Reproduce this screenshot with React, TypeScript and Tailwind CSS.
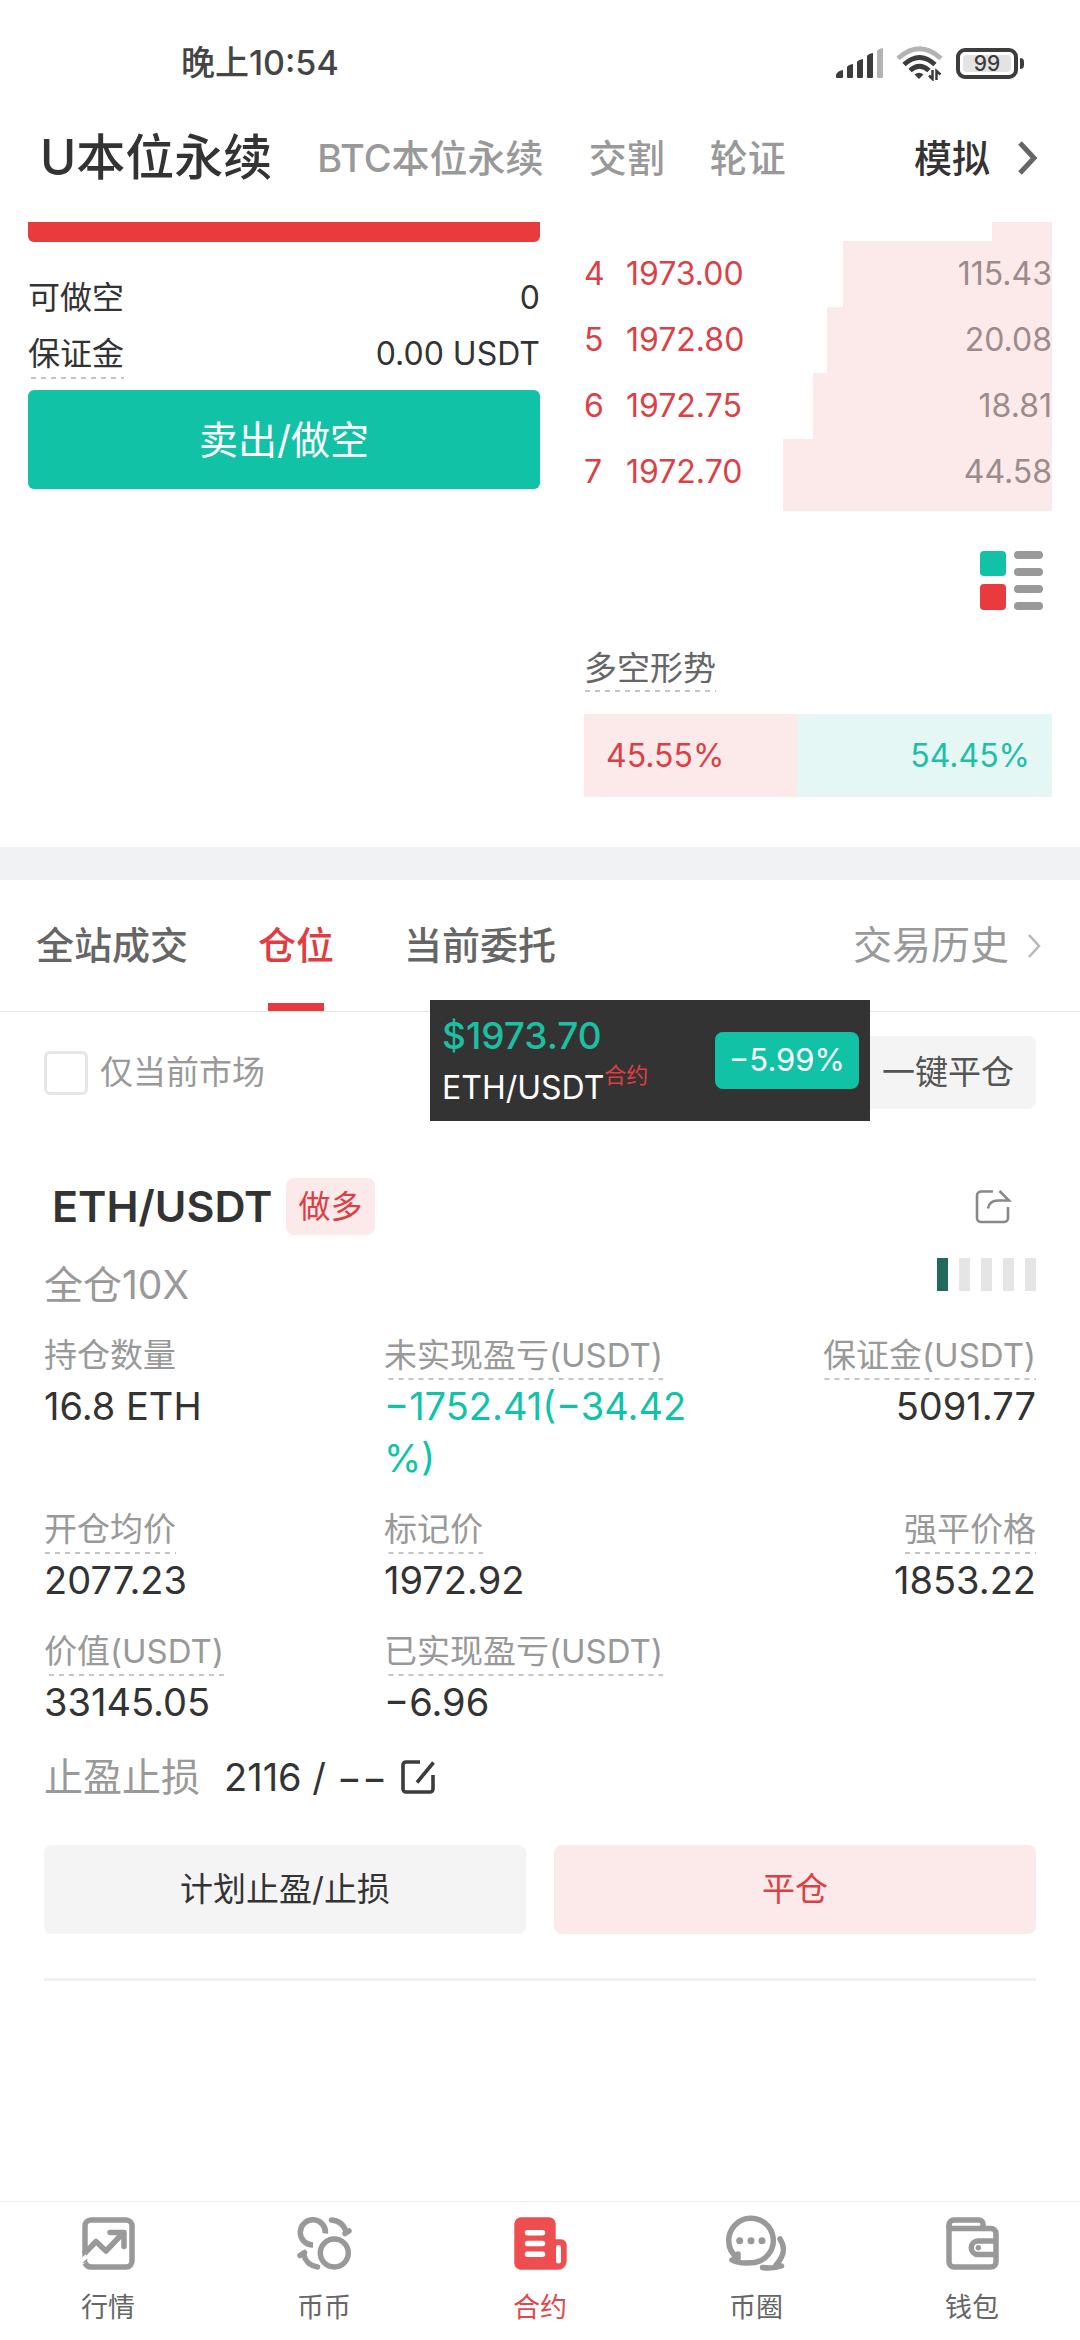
import { useState } from "react";
import type { ReactNode } from "react";

interface OrderRow {
  level: string;
  price: string;
  amount: string;
  depth: number;
}

interface Metric {
  label: string;
  value: ReactNode;
  underline: boolean;
}

const asks: OrderRow[] = [
  { level: "4", price: "1973.00", amount: "115.43", depth: 76 },
  { level: "5", price: "1972.80", amount: "20.08", depth: 82 },
  { level: "6", price: "1972.75", amount: "18.81", depth: 87 },
  { level: "7", price: "1972.70", amount: "44.58", depth: 98 },
];

const metrics: Metric[] = [
  { label: "持仓数量", value: "16.8 ETH", underline: false },
  {
    label: "未实现盈亏(USDT)",
    value: (
      <span className="text-[#0fc3a7]">
        −1752.41(−34.42
        <br />
        %)
      </span>
    ),
    underline: true,
  },
  { label: "保证金(USDT)", value: "5091.77", underline: true },
  { label: "开仓均价", value: "2077.23", underline: true },
  { label: "标记价", value: "1972.92", underline: true },
  { label: "强平价格", value: "1853.22", underline: true },
  { label: "价值(USDT)", value: "33145.05", underline: true },
  { label: "已实现盈亏(USDT)", value: "−6.96", underline: true },
];

const dashed =
  "bg-[linear-gradient(90deg,#c4c4c4_50%,transparent_50%)] bg-[length:10px_2px] bg-bottom bg-repeat-x";

// bar that grows from the right edge of its cell
const depthStyle = (depth: number) => ({
  background: `linear-gradient(#fceaea, #fceaea) right / ${depth}% 100% no-repeat`,
});

function StatusBar() {
  return (
    <div className="flex h-[94px] items-center justify-between pt-8 pr-14 pl-[181px] text-[#444444]">
      <span className="text-[34px] leading-[48px] font-medium">晚上10:54</span>
      <div className="flex items-center">
        <svg width="48" height="32" viewBox="0 0 48 32" fill="#3c3c3c">
          <path d="M0 28q1-4 7-5v7q0 1-1 1H1q-1 0-1-1z" />
          <path d="M11 20q1-2 6-3v13q0 1-1 1h-4q-1 0-1-1z" />
          <path d="M21 15q1-2 6-3v18q0 1-1 1h-4q-1 0-1-1z" />
          <path d="M31 9q1-2 6-3v24q0 1-1 1h-4q-1 0-1-1z" />
          <path d="M41 4q1-2 6-3v29q0 1-1 1h-4q-1 0-1-1z" fill="#b3b3b3" />
        </svg>
        <svg className="ml-3" width="48" height="36" viewBox="0 0 48 36" fill="none" strokeWidth="4.800" strokeLinecap="butt">
          <path d="M2 13.500Q23.500-6 45 13.500" stroke="#b3b3b3" />
          <path d="M8 19.500Q23.500 5.500 39 19.500" stroke="#3c3c3c" />
          <path d="M14 25.500Q23.500 17 33 25.500" stroke="#3c3c3c" />
          <path d="M18.500 29.500q4.500-3.500 9 0l-4.500 4.500z" fill="#3c3c3c" />
          <path d="M36.500 25v9l-3.500-3.500M40.500 35v-9l4 3.500" stroke="#3c3c3c" strokeWidth="2.500" />
        </svg>
        <div className="ml-3 flex h-[31px] w-[62px] items-center justify-center rounded-[9px] border-4 border-[#3c3c3c] p-[3px]">
          <span className="flex h-full w-full items-center justify-center rounded-sm bg-[#e3e3e3] text-[21px] leading-none font-medium text-[#3c3c3c]">
            99
          </span>
        </div>
        <span className="ml-[2px] h-[11px] w-1 rounded-r-sm bg-[#3c3c3c]" />
      </div>
    </div>
  );
}

function TopNav() {
  return (
    <nav className="flex h-32 items-center justify-between pr-[42px] pl-10 text-[38px] leading-[56px] font-medium text-[#999999]">
      <div className="flex items-center gap-[45px]">
        <a href="#usdt" className="text-[49px] text-[#333333]">U本位永续</a>
        <a href="#coin">BTC本位永续</a>
        <a href="#delivery">交割</a>
        <a href="#warrant">轮证</a>
      </div>
      <a href="#demo" className="flex items-center gap-7 text-[#333333]">
        模拟
        <svg width="20" height="34" viewBox="0 0 20 34" fill="none" stroke="#666666" strokeWidth="5">
          <path d="M2 2l14 15L2 32" />
        </svg>
      </a>
    </nav>
  );
}

function TradePanel() {
  return (
    <div className="text-[32px] leading-10 text-[#333333]">
      <div className="h-5 rounded-b-md bg-[#e93a3d]" />
      <div className="mt-9 flex justify-between">
        <span>可做空</span>
        <span>0</span>
      </div>
      <div className="mt-4 flex items-start justify-between">
        <span className={`pb-[5px] ${dashed}`}>保证金</span>
        <span>0.00 USDT</span>
      </div>
      <button className="mt-[11px] h-[99px] w-full rounded-md bg-[#11c2a7] text-[39px] text-white">
        卖出/做空
      </button>
    </div>
  );
}

function OrderBook() {
  return (
    <div className="flex flex-col text-[32px] leading-10">
      <table className="w-full table-fixed leading-[66px]">
        <colgroup>
          <col className="w-[42px]" />
          <col className="w-[151px]" />
          <col />
        </colgroup>
        <tbody>
          <tr className="h-[19px]">
            <td colSpan={2} className="p-0" />
            <td className="p-0" style={depthStyle(22)} />
          </tr>
          {asks.map((row) => (
            <tr key={row.level} className="h-[66px] align-top last:h-[72px]">
              <td className="p-0 text-[#dc3f45]">{row.level}</td>
              <td className="p-0 text-[#dc3f45]">{row.price}</td>
              <td className="p-0 text-right text-[#9b8b8b]" style={depthStyle(row.depth)}>
                {row.amount}
              </td>
            </tr>
          ))}
        </tbody>
      </table>
      <button className="mt-10 mr-2 self-end">
        <svg width="64" height="60" viewBox="0 0 64 60">
          <rect x="0" y="0" width="26" height="25" rx="4" fill="#11c2a7" />
          <rect x="0" y="33" width="26" height="26" rx="4" fill="#e93a3d" />
          <g fill="#999999">
            <rect x="34" y="0" width="29" height="8" rx="4" />
            <rect x="34" y="17" width="29" height="8" rx="4" />
            <rect x="34" y="34" width="29" height="8" rx="4" />
            <rect x="34" y="51" width="29" height="8" rx="4" />
          </g>
        </svg>
      </button>
      <span className={`mt-[37px] self-start pb-1 text-[33px] text-[#666666] ${dashed}`}>多空形势</span>
      <div className="mt-[22px] flex h-[83px] items-center">
        <span className="flex h-full items-center bg-[#fceaea] pl-[22px] text-[#dc3f45]" style={{ width: "45.55%" }}>
          45.55%
        </span>
        <span className="flex h-full flex-1 items-center justify-end bg-[#e5f7f5] pr-[22px] text-[#1fbfa5]">
          54.45%
        </span>
      </div>
    </div>
  );
}

function FloatingTicker() {
  return (
    <div className="absolute -top-3 right-[210px] flex h-[121px] w-[440px] items-center justify-between bg-[#333333] pr-[11px] pl-3">
      <div className="flex flex-col">
        <span className="text-[37px] leading-[54px] font-medium text-[#1dbfa3]">$1973.70</span>
        <span className="flex items-start text-[32px] leading-[50px] text-white">
          ETH/USDT
          <span className="text-[22px] leading-6 text-[#e03d42]">合约</span>
        </span>
      </div>
      <span className="flex h-[57px] items-center rounded-lg bg-[#11c2a7] px-[14px] text-[31px] text-white">
        −5.99%
      </span>
    </div>
  );
}

function PositionCard() {
  return (
    <article className="mx-11 mt-[69px] text-[#333333]">
      <header className="flex h-[57px] items-center pr-6 pl-2">
        <h2 className="text-[43px] leading-[57px] font-semibold">ETH/USDT</h2>
        <span className="ml-[14px] flex h-full items-center rounded-lg bg-[#fceaea] px-3 text-[32px] text-[#dc3f45]">
          做多
        </span>
        <button className="ml-auto">
          <svg width="37" height="36" viewBox="0 0 37 36" fill="none" stroke="#888888" strokeWidth="2.600">
            <path d="M18 2.500H6a4 4 0 0 0-4 4V29a4 4 0 0 0 4 4h23a4 4 0 0 0 4-4V18" />
            <path d="M13 19.500c1-6 5-8 10-8h11L24.500 2" />
          </svg>
        </button>
      </header>

      <div className="mt-[23px] flex items-start justify-between">
        <span className="text-[39px] leading-[54px] text-[#999999]">全仓10X</span>
        <div className="flex gap-[11px]">
          <span className="h-[33px] w-[11px] bg-[#216a5b]" />
          <span className="h-[33px] w-[11px] bg-[#e5e5e5]" />
          <span className="h-[33px] w-[11px] bg-[#e5e5e5]" />
          <span className="h-[33px] w-[11px] bg-[#e5e5e5]" />
          <span className="h-[33px] w-[11px] bg-[#e5e5e5]" />
        </div>
      </div>

      <dl className="mt-[23px] grid grid-cols-3 gap-x-7 gap-y-[25px]">
        {metrics.map((item, idx) => (
          <div
            key={item.label}
            className={`flex flex-col ${idx % 3 === 2 ? "items-end" : "items-start"}`}
          >
            <dt
              className={`pb-[5px] text-[33px] leading-10 whitespace-nowrap text-[#999999] ${
                item.underline ? dashed : ""
              }`}
            >
              {item.label}
            </dt>
            <dd className="text-[38px] leading-[52px] whitespace-nowrap">{item.value}</dd>
          </div>
        ))}
      </dl>

      <div className="mt-[23px] flex items-center text-[38px] leading-[52px]">
        <span className="text-[39px] text-[#999999]">止盈止损</span>
        <span className="ml-6">2116 / −−</span>
        <button className="ml-[14px]">
          <svg width="35" height="34" viewBox="0 0 35 34" fill="none" stroke="#3c3c3c" strokeWidth="3.600">
            <path d="M19 2H5a3 3 0 0 0-3 3v24a3 3 0 0 0 3 3h24a3 3 0 0 0 3-3V15" />
            <path d="M16 22.500L32.500 2.500" />
          </svg>
        </button>
      </div>

      <div className="mt-[42px] grid grid-cols-2 gap-7 text-[33px]">
        <button className="h-[89px] rounded-lg bg-[#f4f4f4]">计划止盈/止损</button>
        <button className="h-[89px] rounded-lg bg-[#fceaea] text-[#dc3f45]">平仓</button>
      </div>
      <hr className="mt-11 border-t-[3px] border-[#f1f1f1]" />
    </article>
  );
}

function ChartIcon() {
  return (
    <svg width="60" height="56" viewBox="0 0 60 56" fill="none" stroke="currentColor" strokeWidth="5.500" strokeLinejoin="round">
      <path d="M7 38V11a6 6 0 0 1 6-6h35a6 6 0 0 1 6 6v35a6 6 0 0 1-6 6H13q-4 0-6-4" />
      <path d="M6.500 38.500L18 26.500l10 9.500 17-18" />
      <path d="M32 17.500h14v14" strokeLinecap="round" />
      <path d="M4.300 36v6.500l5-5zM4.300 48l5-4.500v4z" fill="currentColor" stroke="none" />
    </svg>
  );
}

function CoinsIcon() {
  return (
    <svg width="60" height="56" viewBox="0 0 60 56" fill="none" stroke="currentColor" strokeWidth="5.500">
      <path d="M31.400 18.500a12.600 12.600 0 1 0-12.400 11.500" />
      <circle cx="40.300" cy="38" r="14" />
      <g strokeLinecap="round" strokeLinejoin="round">
        <path d="M37.500 5Q49 6 52 17" />
        <path d="M51 18.500l4-2.500" />
        <path d="M23.500 52Q12 50 9.500 39" />
        <path d="M6 40.500l4.500-3" />
      </g>
    </svg>
  );
}

function ContractIcon() {
  return (
    <svg width="60" height="56" viewBox="0 0 60 56" fill="none" strokeLinecap="round">
      <path
        d="M11 2.300h28a6.700 6.700 0 0 1 6.700 6.700v15.300h5.300a5.700 5.700 0 0 1 5.700 5.700v16a8.700 8.700 0 0 1-8.700 8.700H11a6.700 6.700 0 0 1-6.700-6.700V9A6.700 6.700 0 0 1 11 2.300z"
        fill="#ef4e50"
      />
      <path d="M17.500 17.700h15M17.500 28.500h15M17.500 39.300h15" stroke="white" strokeWidth="5.500" />
      <path d="M48.500 32.500v13.500" stroke="white" strokeWidth="5" />
    </svg>
  );
}

function ChatIcon() {
  return (
    <svg className="overflow-visible" width="60" height="56" viewBox="0 0 60 56" fill="none" stroke="currentColor" strokeWidth="5.500" strokeLinecap="round" strokeLinejoin="round">
      <path d="M12 43.500C6 39 2.700 33 2.700 25.700a22.300 22.300 0 1 1 26 21.800C19 48.500 11 48 6 45l6-1.500V39" />
      <path d="M54 24c6 9 4 17-4 26M36.500 52.500q10 1.500 19-1.500" />
      <g fill="currentColor" stroke="none">
        <circle cx="13.700" cy="25.700" r="3.500" />
        <circle cx="25" cy="25.700" r="3.500" />
        <circle cx="36" cy="25.700" r="3.500" />
      </g>
    </svg>
  );
}

function WalletIcon() {
  return (
    <svg width="60" height="56" viewBox="0 0 60 56" fill="none" stroke="currentColor" strokeWidth="5.500" strokeLinejoin="round">
      <path d="M7 13.500V10a5 5 0 0 1 5-5h25a4 4 0 0 1 4 4v4.500" />
      <path d="M7 10v37a5 5 0 0 0 5 5h37a5 5 0 0 0 5-5V18.500a5 5 0 0 0-5-5H7" />
      <path d="M54 26H36a6.500 6.500 0 0 0 0 13.500h18" />
      <circle cx="36.300" cy="32.700" r="2.700" fill="currentColor" stroke="none" />
    </svg>
  );
}

const tabBar = [
  { name: "行情", href: "#market", icon: <ChartIcon /> },
  { name: "币币", href: "#spot", icon: <CoinsIcon /> },
  { name: "合约", href: "#contract", icon: <ContractIcon />, active: true },
  { name: "币圈", href: "#community", icon: <ChatIcon /> },
  { name: "钱包", href: "#wallet", icon: <WalletIcon /> },
];

export default function App() {
  const [onlyCurrent, setOnlyCurrent] = useState(false);
  const [tab, setTab] = useState("仓位");

  return (
    <div className="flex min-h-screen flex-col bg-white font-['Inter','Noto_Sans_CJK_SC',sans-serif]">
      <StatusBar />
      <TopNav />

      <section className="grid grid-cols-[512fr_468fr] gap-11 px-7 pb-[50px]">
        <TradePanel />
        <OrderBook />
      </section>

      <div className="h-[33px] bg-[#f0f2f4]" />

      <div className="flex h-[132px] justify-between border-b border-[#e3e3e3] pr-[38px] pl-9 text-[38px]">
        <div className="flex gap-[70px]">
          {["全站成交", "仓位", "当前委托"].map((name) => (
            <button
              key={name}
              onClick={() => setTab(name)}
              className={`relative h-full font-medium ${tab === name ? "text-[#e03d42]" : "text-[#666666]"}`}
            >
              {name}
              {tab === name && (
                <span className="absolute bottom-0 left-1/2 h-2 w-14 -translate-x-1/2 bg-[#e53b3f]" />
              )}
            </button>
          ))}
        </div>
        <a href="#history" className="flex items-center gap-[18px] text-[39px] text-[#999999]">
          交易历史
          <svg width="15" height="24" viewBox="0 0 15 24" fill="none" stroke="#b8b8b8" strokeWidth="2.500">
            <path d="M2 1l10 11L2 23" />
          </svg>
        </a>
      </div>

      <div className="relative flex items-center justify-between px-11 pt-6 text-[33px]">
        <label className="flex items-center gap-3 text-[#999999]">
          <input
            type="checkbox"
            checked={onlyCurrent}
            onChange={(e) => setOnlyCurrent(e.target.checked)}
            className="size-11 appearance-none rounded-md border-[3px] border-[#e6e6e6] checked:bg-[#e53b3f]"
          />
          仅当前市场
        </label>
        <button className="h-[73px] rounded-lg bg-[#f4f4f4] px-[22px] text-[#555555]">一键平仓</button>
        <FloatingTicker />
      </div>

      <PositionCard />

      <nav className="mt-auto grid grid-cols-5 border-t border-[#ececec] pt-[13px] pb-3">
        {tabBar.map((item) => (
          <a
            key={item.name}
            href={item.href}
            className="flex flex-col items-center gap-[17px] text-[#999999]"
          >
            {item.icon}
            <span
              className={`text-[27px] leading-10 ${item.active ? "text-[#e0484c]" : "text-[#666666]"}`}
            >
              {item.name}
            </span>
          </a>
        ))}
      </nav>
    </div>
  );
}
